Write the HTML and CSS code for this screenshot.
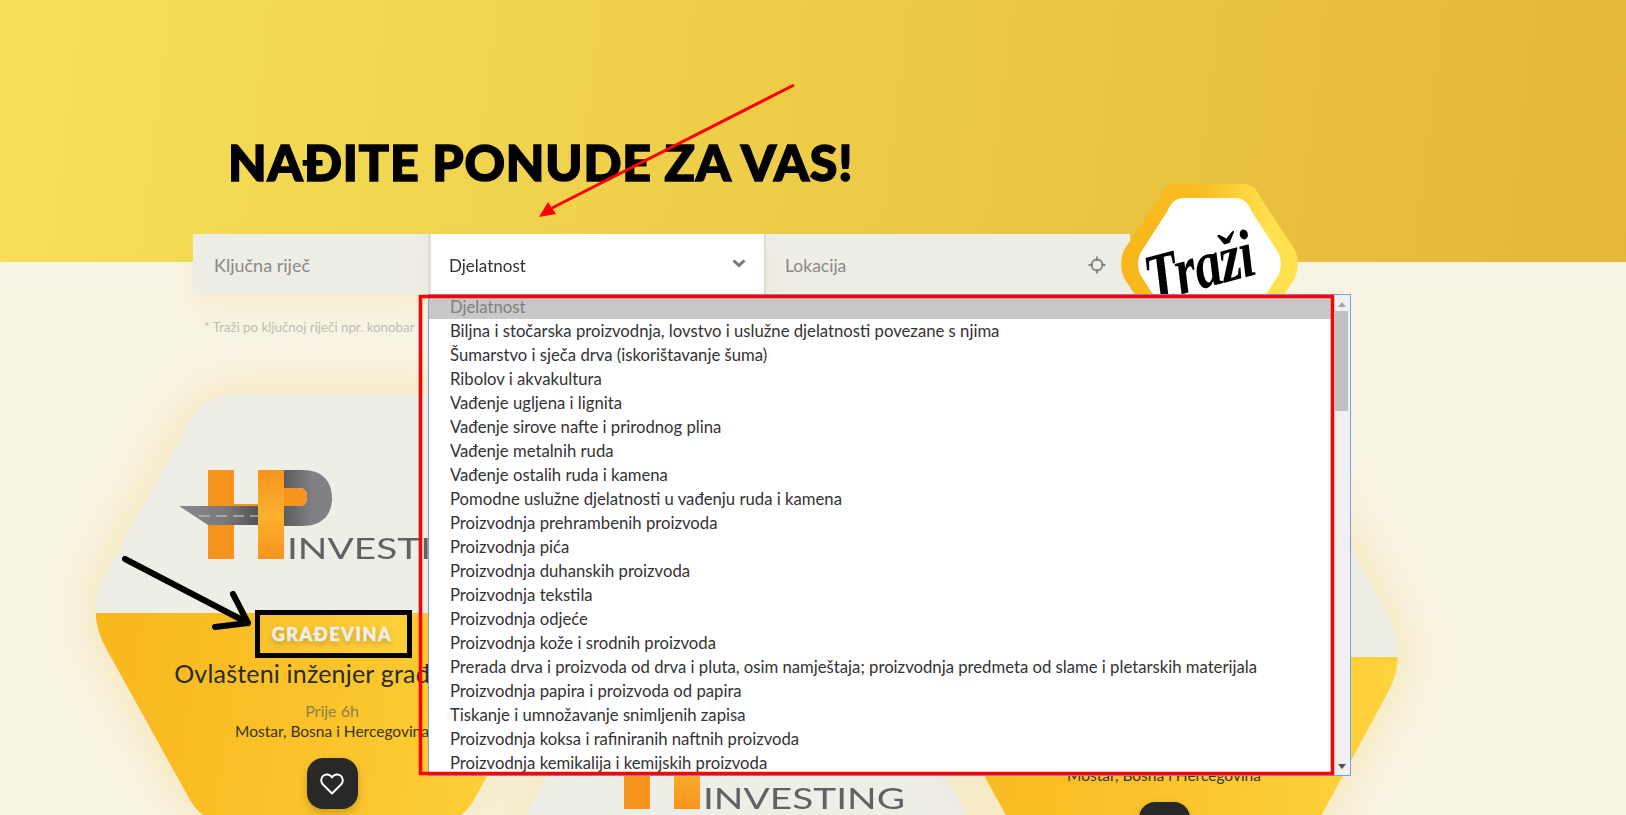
FILE: index.html
```html
<!DOCTYPE html>
<html lang="bs">

<head>
    <meta charset="UTF-8">
    <meta name="viewport" content="width=device-width, initial-scale=1.0">
    <title>Nađite ponude za vas!</title>
    <link rel="stylesheet" href="styles.css">
</head>

<body>
    <svg class="defs" width="0" height="0">
        <defs>
            <linearGradient id="bar-orange" x1="0" y1="0" x2="0" y2="1">
                <stop offset="0" stop-color="#f7941e"></stop>
                <stop offset="0.52" stop-color="#fbb02c"></stop>
                <stop offset="1" stop-color="#f7941e"></stop>
            </linearGradient>
            <linearGradient id="p-grey" x1="0" y1="0" x2="1" y2="0">
                <stop offset="0" stop-color="#5c5c5e"></stop>
                <stop offset="0.6" stop-color="#808184"></stop>
                <stop offset="1" stop-color="#808184"></stop>
            </linearGradient>
            <linearGradient id="road-grey" x1="0" y1="0" x2="1" y2="0">
                <stop offset="0" stop-color="#8a8a8c"></stop>
                <stop offset="0.6" stop-color="#77777a"></stop>
                <stop offset="1" stop-color="#505052"></stop>
            </linearGradient>
            <symbol id="hp-logo" viewBox="0 0 310 90">
                <rect x="29" y="0" width="26" height="89" fill="#f7941e"></rect>
                <rect x="55" y="34" width="26" height="3" fill="#f7941e"></rect>
                <path d="M105 0H124C143 0 153 11 153 28C153 45 143 56 124 56H105V36H121C126 36 128 32 128 27C128 22 126 18 121 18H105Z" fill="url(#p-grey)"></path>
                <path d="M0 36H81V55H29Z" fill="url(#road-grey)"></path>
                <path d="M20 46H81" stroke="#b5b5b5" stroke-width="1.5" stroke-dasharray="11 6" fill="none"></path>
                <rect x="79" y="0" width="26" height="89" fill="url(#bar-orange)"></rect>
                <path d="M105 18H121C126 18 128 22 128 27C128 32 126 36 121 36H105Z" fill="#f7941e"></path>
                <text class="logo-word" x="108" y="89" textLength="202" lengthAdjust="spacingAndGlyphs">INVESTING</text>
            </symbol>
        </defs>
    </svg>

    <header class="hero">
        <h1 class="hero-title">NAĐITE PONUDE ZA VAS!</h1>
    </header>

    <form class="search">
        <div class="field field-keyword">Ključna riječ</div>
        <div class="field field-select">
            <span>Djelatnost</span>
            <svg class="chevron" width="14" height="9" viewBox="0 0 14 9">
                <path d="M1.5 1.5L7 6.5L12.5 1.5" fill="none" stroke="#77776f" stroke-width="3"></path>
            </svg>
            <div class="dropdown">
                <ul class="dropdown-list">
                    <li class="selected">Djelatnost</li>
                    <li>Biljna i stočarska proizvodnja, lovstvo i uslužne djelatnosti povezane s njima</li>
                    <li>Šumarstvo i sječa drva (iskorištavanje šuma)</li>
                    <li>Ribolov i akvakultura</li>
                    <li>Vađenje ugljena i lignita</li>
                    <li>Vađenje sirove nafte i prirodnog plina</li>
                    <li>Vađenje metalnih ruda</li>
                    <li>Vađenje ostalih ruda i kamena</li>
                    <li>Pomodne uslužne djelatnosti u vađenju ruda i kamena</li>
                    <li>Proizvodnja prehrambenih proizvoda</li>
                    <li>Proizvodnja pića</li>
                    <li>Proizvodnja duhanskih proizvoda</li>
                    <li>Proizvodnja tekstila</li>
                    <li>Proizvodnja odjeće</li>
                    <li>Proizvodnja kože i srodnih proizvoda</li>
                    <li>Prerada drva i proizvoda od drva i pluta, osim namještaja; proizvodnja predmeta od slame i pletarskih materijala</li>
                    <li>Proizvodnja papira i proizvoda od papira</li>
                    <li>Tiskanje i umnožavanje snimljenih zapisa</li>
                    <li>Proizvodnja koksa i rafiniranih naftnih proizvoda</li>
                    <li>Proizvodnja kemikalija i kemijskih proizvoda</li>
                </ul>
                <div class="scrollbar">
                    <span class="arrow-up"></span>
                    <span class="thumb"></span>
                    <span class="arrow-down"></span>
                </div>
            </div>
        </div>
        <div class="field field-location">
            <span>Lokacija</span>
            <svg class="target" width="18" height="18" viewBox="0 0 18 18">
                <circle cx="9" cy="9" r="5.5" fill="none" stroke="#85857e" stroke-width="1.8"></circle>
                <path d="M9 0.5V5M9 13V17.5M0.5 9H5M13 9H17.5" stroke="#85857e" stroke-width="1.8"></path>
            </svg>
        </div>
        <div class="hex-button">
            <div class="hex-inner">
                <span class="hex-label">Traži</span>
            </div>
        </div>
    </form>

    <p class="hint">* Traži po ključnoj riječi npr. konobar</p>

    <section class="cards">
        <article class="card">
            <div class="card-shape">
                <div class="card-logo">
                    <svg class="logo" width="310" height="90"><use href="#hp-logo"></use></svg>
                </div>
                <div class="card-body">
                    <span class="badge">GRAĐEVINA</span>
                    <h2 class="card-title">Ovlašteni inženjer građevine</h2>
                    <p class="card-age">Prije 6h</p>
                    <p class="card-place">Mostar, Bosna i Hercegovina</p>
                    <button class="fav" type="button">
                        <svg width="24" height="22" viewBox="0 0 24 22">
                            <path d="M12 20.5L3 11.5C0.5 9 0.7 5.2 3 3C5.4 0.8 9 1 11 3.2L12 4.4L13 3.2C15 1 18.6 0.8 21 3C23.3 5.2 23.5 9 21 11.5Z" fill="none" stroke="#fff" stroke-width="2" stroke-linejoin="round"></path>
                        </svg>
                    </button>
                </div>
            </div>
        </article>
        <article class="card card-low">
            <div class="card-shape">
                <div class="card-logo">
                    <svg class="logo" width="310" height="90"><use href="#hp-logo"></use></svg>
                </div>
                <div class="card-body"></div>
            </div>
        </article>
        <article class="card card-mid">
            <div class="card-shape">
                <div class="card-logo">
                    <svg class="logo" width="310" height="90"><use href="#hp-logo"></use></svg>
                </div>
                <div class="card-body">
                    <span class="badge">GRAĐEVINA</span>
                    <h2 class="card-title">Ovlašteni inženjer građevine</h2>
                    <p class="card-age">Prije 6h</p>
                    <p class="card-place">Mostar, Bosna i Hercegovina</p>
                    <button class="fav" type="button">
                        <svg width="24" height="22" viewBox="0 0 24 22">
                            <path d="M12 20.5L3 11.5C0.5 9 0.7 5.2 3 3C5.4 0.8 9 1 11 3.2L12 4.4L13 3.2C15 1 18.6 0.8 21 3C23.3 5.2 23.5 9 21 11.5Z" fill="none" stroke="#fff" stroke-width="2" stroke-linejoin="round"></path>
                        </svg>
                    </button>
                </div>
            </div>
        </article>
    </section>

    <!-- hand drawn marks on top of the screenshot -->
    <svg class="marks" width="1626" height="815" viewBox="0 0 1626 815">
        <path d="M794 85L552 208" stroke="#f00" stroke-width="3" fill="none"></path>
        <path d="M539 217L548 202L556 214Z" fill="#f00"></path>
        <rect x="420.5" y="296.5" width="912" height="477" fill="none" stroke="#f00" stroke-width="3.5"></rect>
        <path d="M125 559L248 623M233 594L248 623L215 627" fill="none" stroke="#000" stroke-width="6" stroke-linecap="round" stroke-linejoin="round"></path>
        <rect x="257.5" y="612.5" width="152" height="43" fill="none" stroke="#000" stroke-width="5"></rect>
    </svg>
</body>

</html>
```

FILE: styles.css
```css
html,
body {
    height: 815px;
    overflow: hidden;
}

body {
    position: relative;
    margin: 0px;
    background: #f8f4e4;
    color: #2b2b2b;
    font-family: "Lato", "Noto Sans", sans-serif;
    font-size: 16px;
}

.defs {
    position: absolute;
}

.hero {
    height: 262px;
    box-sizing: border-box;
    padding: 137px 0 0 228px;
    background: linear-gradient(97deg, #f6e05a 0%, #ecca45 55%, #e4b738 100%);
}

.hero-title {
    margin: 0;
    font-size: 50px;
    line-height: 50px;
    font-weight: 900;
    letter-spacing: 0.85px;
    color: #000;
    -webkit-text-stroke: 1.6px #000;
    white-space: nowrap;
}

.search {
    position: relative;
    display: flex;
    align-items: center;
    height: 60px;
    margin: -28px 0 0 193px;
}

.field {
    display: flex;
    align-items: center;
    height: 60px;
    box-sizing: border-box;
    padding-top: 2px;
    background: #eeede6;
    color: #8a8a84;
    font-size: 17px;
    box-shadow: 0 14px 24px rgba(247, 190, 60, 0.12);
}

.field-keyword {
    width: 235px;
    padding-left: 21px;
    font-size: 18px;
}

.field-select {
    position: relative;
    z-index: 2;
    justify-content: space-between;
    width: 336px;
    padding: 2px 18px 0 18px;
    border-left: 3px solid #dfded7;
    background: #fff;
    color: #333;
}

.field-location {
    justify-content: space-between;
    width: 366px;
    padding: 2px 24px 0 19px;
    border-left: 2px solid #dfded7;
    font-size: 17.5px;
}

.chevron {
    margin-top: -3px;
}

.dropdown {
    position: absolute;
    left: -3px;
    top: 60px;
    display: flex;
    width: 923px;
    height: 482px;
    box-sizing: border-box;
    border: 1px solid #7b9ee0;
    background: #fff;
}

.dropdown-list {
    flex: 1;
    margin: 0;
    padding: 0;
    list-style: none;
    color: #333;
    font-size: 16.7px;
}

.dropdown-list li {
    height: 24px;
    padding-left: 21px;
    line-height: 24px;
    white-space: nowrap;
}

.dropdown-list .selected {
    background: #c8c8c8;
    color: #808080;
}

.scrollbar {
    display: flex;
    flex-direction: column;
    align-items: center;
    width: 17px;
    background: #f0f0f0;
}

.thumb {
    width: 13px;
    height: 100px;
    margin-top: 4px;
    background: #c0c0c0;
}

.arrow-up,
.arrow-down {
    width: 0;
    height: 0;
    border-left: 4px solid transparent;
    border-right: 4px solid transparent;
}

.arrow-up {
    margin-top: 7px;
    border-bottom: 5px solid #a3a3a3;
}

.arrow-down {
    margin-top: auto;
    margin-bottom: 6px;
    border-top: 5px solid #505050;
}

.hex-button {
    flex: none;
    display: flex;
    justify-content: center;
    align-items: center;
    width: 177px;
    height: 160px;
    margin-left: -9px;
    background: linear-gradient(90deg, #f7b71a 0%, #f8bd22 45%, #ffe14e 85%);
    clip-path: path("M56 0H121Q134 0 139 13L174 66Q180 80 174 94L139 147Q134 160 121 160H56Q43 160 38 147L3 94Q-3 80 3 66L38 13Q43 0 56 0Z");
}

.hex-inner {
    display: flex;
    justify-content: center;
    width: 144px;
    height: 132px;
    overflow: hidden;
    background: #fff;
    clip-path: path("M47 0H97Q109 0 114 13L141 55Q146 66 141 77L114 119Q109 132 97 132H47Q35 132 30 119L3 77Q-2 66 3 55L30 13Q35 0 47 0Z");
}

.hex-label {
    margin: 36px 12px 0 0;
    font-family: "Liberation Serif", serif;
    font-size: 54px;
    font-weight: 700;
    font-style: italic;
    letter-spacing: -1px;
    line-height: 70px;
    color: #000;
    transform: rotate(-15deg) scaleY(1.25);
}

.hint {
    margin: 25px 0 0 204px;
    font-size: 13.3px;
    line-height: 16px;
    color: #bdbdb6;
}

.cards {
    display: flex;
    align-items: flex-start;
    margin-top: 59px;
    padding-left: 95px;
}

.card {
    flex: none;
    width: 474px;
    height: 432px;
    margin-left: -58px;
    filter: drop-shadow(0 0 28px rgba(247, 183, 30, 0.28));
}

.card:first-child {
    margin-left: 0;
}

.card-low {
    margin-top: 250px;
}

.card-mid {
    margin-top: 44px;
}

.card-shape {
    display: flex;
    flex-direction: column;
    height: 100%;
    clip-path: path("M145 0H329Q364 0 379 26L460 176Q482 216 460 256L379 406Q364 432 329 432H145Q110 432 95 406L12 256Q-11 216 12 176L95 26Q110 0 145 0Z");
}

.card-logo {
    flex: none;
    display: flex;
    justify-content: center;
    height: 219px;
    box-sizing: border-box;
    padding: 76px 0 0 4px;
    background: #eeede6;
}

.logo {
    display: block;
}

.logo-word {
    font-family: "Lato", sans-serif;
    font-size: 29px;
    font-weight: 400;
    fill: #616163;
}

.card-body {
    flex: 1;
    display: flex;
    flex-direction: column;
    align-items: center;
    background: linear-gradient(100deg, #f7b71d 0%, #fbc52c 55%, #ffd53f 100%);
}

.badge {
    display: flex;
    justify-content: center;
    align-items: center;
    width: 147px;
    height: 38px;
    margin-top: 2px;
    font-size: 18px;
    font-weight: 900;
    letter-spacing: 1.6px;
    color: #f0efe8;
    -webkit-text-stroke: 0.6px #f0efe8;
    background: linear-gradient(90deg, #f9c22b, #fdd03a);
    text-shadow: 0 3px 5px rgba(120, 90, 20, 0.45);
}

.card-title {
    margin: 5px 0 0;
    font-size: 25px;
    line-height: 30px;
    font-weight: 400;
    letter-spacing: 0.2px;
    white-space: nowrap;
}

.card-age {
    margin: 12px 0 0;
    line-height: 21px;
    color: #8d7e50;
}

.card-place {
    margin: 0;
    font-size: 15.5px;
    line-height: 21px;
    color: #3a3420;
}

.fav {
    display: flex;
    justify-content: center;
    align-items: center;
    width: 51px;
    height: 51px;
    margin-top: 16px;
    padding: 0;
    border: 0;
    border-radius: 16px;
    background: #282828;
    box-shadow: 0 4px 8px rgba(100, 70, 0, 0.3);
}

.marks {
    position: absolute;
    left: 0;
    top: 0;
    z-index: 3;
    pointer-events: none;
}
```
